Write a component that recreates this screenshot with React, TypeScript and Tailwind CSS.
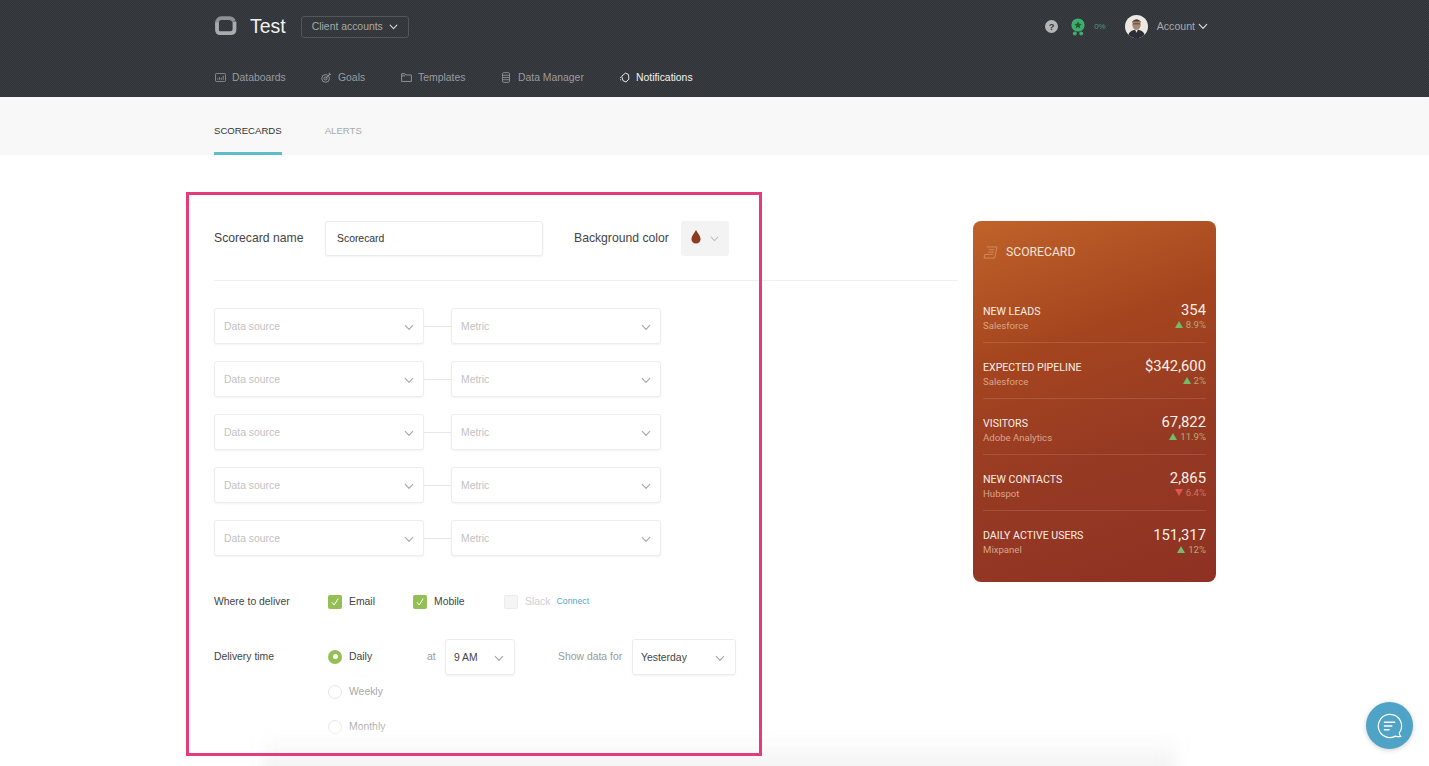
import React from "react";

const Chevron = ({ className = "" }: { className?: string }) => (
  <svg viewBox="0 0 12 8" className={className} fill="none" stroke="currentColor" strokeWidth="1.4" strokeLinecap="round" strokeLinejoin="round">
    <path d="M1.5 1.5 6 6.2l4.5-4.7" />
  </svg>
);

const navIcons: Record<string, React.ReactNode> = {
  Databoards: (
    <svg viewBox="0 0 12 10" className="w-[11px] h-[9px]" fill="none" stroke="currentColor" strokeWidth="0.9">
      <rect x="0.5" y="0.5" width="11" height="9" rx="1" />
      <path d="M3 7.5V6M5 7.5V4.5M7 7.5V5.5M9 7.5V3" />
    </svg>
  ),
  Goals: (
    <svg viewBox="0 0 12 12" className="w-[11px] h-[11px]" fill="none" stroke="currentColor" strokeWidth="1">
      <circle cx="5" cy="7" r="4.2" />
      <circle cx="5" cy="7" r="1.7" />
      <path d="M5 7l5-5M9 .8v2h2" />
    </svg>
  ),
  Templates: (
    <svg viewBox="0 0 12 10" className="w-[11px] h-[9px]" fill="none" stroke="currentColor" strokeWidth="1">
      <path d="M.6 9.4V.8h3.6l1 1.4h6.2v7.2z" />
      <path d="M.6 3.2h3.8" />
    </svg>
  ),
  "Data Manager": (
    <svg viewBox="0 0 9 12" className="w-[8px] h-[11px]" fill="none" stroke="currentColor" strokeWidth="0.9">
      <rect x="0.5" y="0.5" width="8" height="11" rx="1.5" />
      <path d="M.5 3.5h8M.5 6h8M.5 8.5h8" />
    </svg>
  ),
  Notifications: (
    <svg viewBox="0 0 12 12" className="w-[11px] h-[11px]" fill="none" stroke="currentColor" strokeWidth="1">
      <path d="M3 4.5 7 1.2l3.4 1.5.4 5-3 3.2-3.5-1.4z" />
      <path d="M1 6.5l.9-.7M1.2 8.7l1-.4" />
    </svg>
  ),
};

function NavItem({ label, active }: { label: string; active?: boolean }) {
  return (
    <div className={`flex items-center gap-[6px] text-[10.4px] ${active ? "text-[#f4f4f4]" : "text-[#9a9c9f]"}`}>
      <span className="w-[12px] flex justify-center">{navIcons[label]}</span>
      <span>{label}</span>
    </div>
  );
}

function Select({ label }: { label: string }) {
  return (
    <div className="w-[210px] h-[36px] rounded-[3px] border border-[#ededed] shadow-[0_1px_2px_rgba(0,0,0,0.05)] bg-white flex items-center justify-between pl-[9px] pr-[9px] text-[10.4px] text-[#c2c2c2]">
      <span className="pt-[2px]">{label}</span>
      <Chevron className="w-[10px] h-[7px] text-[#a9a9a9] mt-[3px]" />
    </div>
  );
}

function Check({ checked, disabled, label }: { checked?: boolean; disabled?: boolean; label: string }) {
  return (
    <div className="flex items-center gap-[7px]">
      <span className={`w-[14px] h-[14px] rounded-[2px] flex items-center justify-center ${checked ? "bg-[#93bf55]" : "bg-[#f5f5f5] border border-[#ececec]"}`}>
        {checked && (
          <svg viewBox="0 0 10 10" className="w-[10px] h-[10px]" fill="none" stroke="white" strokeWidth="1">
            <path d="M2 5.3 4.2 8 8.2 1.6" />
          </svg>
        )}
      </span>
      <span className={disabled ? "text-[#cfcfcf]" : "text-[#444]"}>{label}</span>
    </div>
  );
}

function Radio({ on, label }: { on?: boolean; label: string }) {
  return (
    <div className="h-[35px] flex items-center gap-[7px]">
      {on ? (
        <span className="w-[14px] h-[14px] rounded-full bg-[#93bf55] flex items-center justify-center">
          <span className="w-[5px] h-[5px] rounded-full bg-white" />
        </span>
      ) : (
        <span className="w-[14px] h-[14px] rounded-full border border-[#e6e6e6]" />
      )}
      <span className={on ? "text-[#444]" : "text-[#a8a8a8]"}>{label}</span>
    </div>
  );
}

const rows = [
  { name: "NEW LEADS", src: "Salesforce", val: "354", d: "8.9%", up: true },
  { name: "EXPECTED PIPELINE", src: "Salesforce", val: "$342,600", d: "2%", up: true },
  { name: "VISITORS", src: "Adobe Analytics", val: "67,822", d: "11.9%", up: true },
  { name: "NEW CONTACTS", src: "Hubspot", val: "2,865", d: "6.4%", up: false },
  { name: "DAILY ACTIVE USERS", src: "Mixpanel", val: "151,317", d: "12%", up: true },
];

export default function App() {
  return (
    <div className="relative h-[766px] overflow-hidden bg-white font-['Liberation_Sans',Arial,sans-serif]">
      {/* Header */}
      <header className="h-[97px] pl-[214px] pr-[221px] bg-[conic-gradient(#2f3236_25%,#3a3d41_0_50%,#2f3236_0_75%,#3a3d41_0)] bg-size-[2px_2px]">
        <div className="h-[53px] flex items-center justify-between">
          <div className="flex items-center">
            <svg viewBox="0 0 23 21" className="w-[23px] h-[21px]" fill="none">
              <path d="M3 9V7c0-2.6 1.6-4.8 4.5-4.8H15c2.6 0 4 1 5 3" stroke="#8f9194" strokeWidth="3.8" />
              <path d="M3 6.5V14c0 1.6 1 3.2 3 3.2h10.5c2.6 0 4-1.5 4-4V5.5" stroke="#a9abad" strokeWidth="3.8" />
            </svg>
            <span className="ml-[13px] text-[19.5px] text-[#f1f1f1] leading-none">Test</span>
            <div className="ml-[15px] w-[108px] h-[22px] border border-[#53565b] rounded-[3px] flex items-center justify-center gap-[6px] text-[10.4px] text-[#a8aaad]">
              <span>Client accounts</span>
              <Chevron className="w-[9px] h-[6px] text-[#d8d8d8]" />
            </div>
          </div>
          <div className="flex items-center text-[10.6px] text-[#a8aaad]">
            <svg viewBox="0 0 14 14" className="w-[13px] h-[13px]">
              <circle cx="7" cy="7" r="7" fill="#b4b5b7" />
              <text x="7" y="10.6" textAnchor="middle" fontSize="10" fontWeight="700" fill="#33373c" fontFamily="Liberation Sans">?</text>
            </svg>
            <svg viewBox="0 0 14 18" className="ml-[13px] w-[14px] h-[18px]">
              <circle cx="7" cy="7" r="6.6" fill="#3fae6c" />
              <path d="M7 3.2 8.1 5.8l2.7.2-2.1 1.7.7 2.7L7 9l-2.4 1.4.7-2.7-2.1-1.7 2.7-.2z" fill="#1f5a3a" />
              <circle cx="3.8" cy="15.6" r="2" fill="#3fae6c" />
              <circle cx="10.2" cy="15.6" r="2" fill="#3fae6c" />
            </svg>
            <span className="ml-[9px] text-[8px] text-[#4f9a72]">0%</span>
            <svg viewBox="0 0 24 24" className="ml-[19px] w-[23px] h-[23px]">
              <defs>
                <clipPath id="av">
                  <circle cx="12" cy="12" r="12" />
                </clipPath>
              </defs>
              <g clipPath="url(#av)">
                <rect width="24" height="24" fill="#ece9e3" />
                <ellipse cx="12" cy="10" rx="4.4" ry="5.4" fill="#a98672" />
                <path d="M7.4 8.5C7 3.6 17 3.6 16.6 8.5l-1-1.8H8.6z" fill="#4a3f38" />
                <path d="M8.6 9.2h6.8" stroke="#3a3331" strokeWidth="0.8" />
                <path d="M3 24c0-6 4-8.5 9-8.5s9 2.5 9 8.5z" fill="#2b2e37" />
                <path d="M10.5 15.5h3l-1.5 3z" fill="#e5e5e5" />
              </g>
            </svg>
            <span className="ml-[9px]">Account</span>
            <Chevron className="ml-[3px] w-[10px] h-[7px] text-[#dcdcdc]" />
          </div>
        </div>
        <nav className="h-[44px] flex items-center pt-[6px]">
          <div className="w-[106px]"><NavItem label="Databoards" /></div>
          <div className="w-[80px]"><NavItem label="Goals" /></div>
          <div className="w-[100px]"><NavItem label="Templates" /></div>
          <div className="w-[118px]"><NavItem label="Data Manager" /></div>
          <NavItem label="Notifications" active />
        </nav>
      </header>

      {/* Tabs */}
      <div className="h-[58px] bg-[#f8f8f8] pl-[214px] flex items-stretch gap-[43px] text-[9.6px]">
        <div className="flex items-center text-[#333] border-b-[3px] border-[#5dbccb] pt-[14px]">SCORECARDS</div>
        <div className="flex items-center text-[#aaa] pt-[11px] pb-0">ALERTS</div>
      </div>

      {/* Main */}
      <main className="pl-[214px] pt-[66px] flex">
        <section className="w-[744px] text-[10.4px]">
          <div className="h-[60px] border-b border-[#f0f0f0]">
            <div className="flex items-center h-[35px] text-[12.2px] text-[#444]">
              <span className="w-[111px]">Scorecard name</span>
              <div className="w-[218px] h-[35px] border border-[#ececec] rounded-[3px] shadow-[0_1px_2px_rgba(0,0,0,0.05)] flex items-center pl-[11px] text-[10.4px] text-[#333]">Scorecard</div>
              <span className="ml-[31px] w-[107px]">Background color</span>
              <div className="w-[48px] h-[35px] bg-[#f3f3f3] rounded-[3px] flex items-center gap-[9px] pl-[10px]">
                <svg viewBox="0 0 10 14" className="w-[10px] h-[14px] -mt-[3px]">
                  <path d="M5 0C3.5 3 .4 6 .4 9a4.6 4.6 0 0 0 9.2 0C9.6 6 6.5 3 5 0z" fill="#8d3a20" />
                </svg>
                <Chevron className="w-[9px] h-[6px] text-[#bdbdbd]" />
              </div>
            </div>
          </div>

          <div className="mt-[27px] flex flex-col gap-[17px]">
            {[0, 1, 2, 3, 4].map((i) => (
              <div key={i} className="flex items-center">
                <Select label="Data source" />
                <span className="w-[27px] h-px bg-[#e6e6e6]" />
                <Select label="Metric" />
              </div>
            ))}
          </div>

          <div className="mt-[38px] flex items-center h-[16px] text-[#444]">
            <span className="w-[114px]">Where to deliver</span>
            <div className="w-[85px]"><Check checked label="Email" /></div>
            <div className="w-[91px]"><Check checked label="Mobile" /></div>
            <Check disabled label="Slack" />
            <span className="ml-[6px] text-[8.8px] text-[#5aa5c9]">Connect</span>
          </div>

          <div className="mt-[29px] flex items-start">
            <span className="w-[114px] h-[35px] flex items-center text-[#444]">Delivery time</span>
            <div className="w-[99px] flex flex-col">
              <Radio on label="Daily" />
              <Radio label="Weekly" />
              <Radio label="Monthly" />
            </div>
            <span className="w-[18px] h-[35px] flex items-center text-[#9a9a9a]">at</span>
            <div className="w-[70px] h-[36px] border border-[#ececec] rounded-[3px] shadow-[0_1px_2px_rgba(0,0,0,0.05)] flex items-center justify-between px-[8px] text-[#444]">
              <span className="pt-[2px]">9 AM</span>
              <Chevron className="w-[10px] h-[7px] text-[#a9a9a9] mt-[3px] mr-[2px]" />
            </div>
            <span className="ml-[43px] w-[74px] h-[35px] flex items-center text-[#9a9a9a]">Show data for</span>
            <div className="w-[104px] h-[36px] border border-[#ececec] rounded-[3px] shadow-[0_1px_2px_rgba(0,0,0,0.05)] flex items-center justify-between px-[8px] text-[#444]">
              <span className="pt-[2px]">Yesterday</span>
              <Chevron className="w-[10px] h-[7px] text-[#a9a9a9] mt-[3px] mr-[2px]" />
            </div>
          </div>
        </section>

        {/* Scorecard preview */}
        <aside className="ml-[15px] w-[243px] h-[361px] rounded-[8px] px-[10px] bg-[linear-gradient(160deg,#bf632a_0%,#a5451f_33%,#973a23_62%,#8e3123_100%)] font-['Roboto',sans-serif]">
          <div className="h-[66px] flex items-center text-[12.2px] text-[#f6e3d6] pb-[4px]">
            <svg viewBox="0 0 16 14" className="w-[15px] h-[13px] text-[#d99a6e]" fill="none" stroke="currentColor" strokeWidth="0.8">
              <path d="M4 1h11l-2.5 12H1l1-4h9" />
              <path d="M6 4h6M5.5 6.5h6" />
            </svg>
            <span className="ml-[8px]">SCORECARD</span>
          </div>
          {rows.map((r, i) => (
            <div key={r.name} className={`h-[56px] flex items-center justify-between ${i < 4 ? "border-b border-[rgba(255,255,255,0.12)]" : ""}`}>
              <div className="flex flex-col pt-[7px]">
                <span className="text-[10.6px] leading-[14px] text-[#fbeee6]">{r.name}</span>
                <span className="text-[9.6px] leading-[13px] text-[#d9a48c]">{r.src}</span>
              </div>
              <div className="flex flex-col items-end pt-[2px]">
                <span className="text-[14.8px] leading-[18px] text-[#fbf0e8]">{r.val}</span>
                <span className="flex items-center gap-[3px] text-[9.6px] leading-[11px] text-[#b9a777]">
                  <span className={`w-0 h-0 border-l-[4px] border-r-[4px] border-l-transparent border-r-transparent ${r.up ? "border-b-[7px] border-b-[#71bd6c]" : "border-t-[7px] border-t-[#e2574c]"}`} />
                  <span className={r.up ? "" : "text-[#d0735f]"}>{r.d}</span>
                </span>
              </div>
            </div>
          ))}
        </aside>
      </main>

      {/* Faint shadow of panel below the fold */}
      <div className="absolute left-[262px] top-[734px] w-[915px] h-[60px] blur-[8px] bg-[linear-gradient(180deg,#ffffff_0%,#f2f2f2_60%)]" />

      {/* Annotation rectangle */}
      <div className="absolute left-[186px] top-[192px] w-[576px] h-[564px] border-[3px] border-[#e63b7a]" />

      {/* Chat bubble */}
      <div className="absolute left-[1366px] top-[702px] w-[47px] h-[47px] rounded-full bg-[#4fa3c7] shadow-[0_1px_5px_rgba(0,0,0,0.2)] flex items-center justify-center">
        <svg viewBox="0 0 28 28" className="w-[26px] h-[26px]" fill="none" stroke="white" strokeWidth="1.3" strokeLinecap="round">
          <path d="M14 1.5a12.5 12.5 0 1 0 6 23.4c1.5.6 3.5.8 5.5.4-.8-1-1.4-2.4-1.6-3.8A12.5 12.5 0 0 0 14 1.5z" />
          <path d="M8 10h11M8 14h8M8 18h5" strokeWidth="1.5" />
        </svg>
      </div>
    </div>
  );
}
